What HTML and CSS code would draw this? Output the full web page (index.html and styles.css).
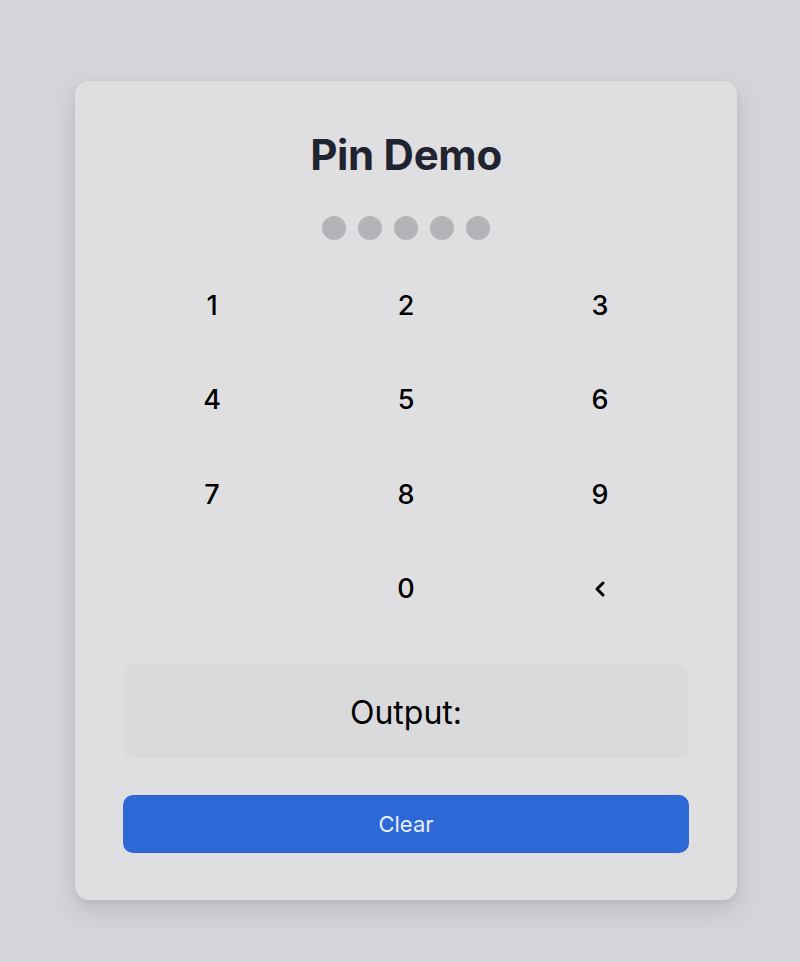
FILE: index.html
```html
<!DOCTYPE html>
<html>
<head>
<meta charset="utf-8">
<link rel="stylesheet" href="styles.css">
</head>
<body>
<div class="page">
  <div class="card">
    <h1 class="title">Pin Demo</h1>
    <div class="dots">
      <span class="dot"></span><span class="dot"></span><span class="dot"></span><span class="dot"></span><span class="dot"></span>
    </div>
    <div class="keypad">
      <button class="key">1</button>
      <button class="key">2</button>
      <button class="key">3</button>
      <button class="key">4</button>
      <button class="key">5</button>
      <button class="key">6</button>
      <button class="key">7</button>
      <button class="key">8</button>
      <button class="key">9</button>
      <span class="key empty"></span>
      <button class="key">0</button>
      <button class="key back"><svg width="14" height="18" viewBox="0 0 14 18"><path d="M10 3 L4 9 L10 15" fill="none" stroke="#000" stroke-width="3" stroke-linecap="round" stroke-linejoin="round"/></svg></button>
    </div>
    <div class="output">Output:</div>
    <button class="clear">Clear</button>
  </div>
</div>
</body>
</html>
```
FILE: styles.css
```css
html, body {
  margin: 0;
  padding: 0;
  background: #d4d5d9;
  font-family: Inter, "Noto Sans", sans-serif;
}
.page {
  padding: 81px 0 0 75px;
  min-height: 962px;
  box-sizing: border-box;
}
.card {
  width: 662px;
  box-sizing: border-box;
  background: #dfdee1;
  border-radius: 14px;
  padding: 48px 48px 47px;
  box-shadow: 0 10px 24px rgba(0, 0, 0, 0.12), 0 2px 6px rgba(0, 0, 0, 0.05);
  display: flex;
  flex-direction: column;
}
.title {
  margin: 0;
  text-align: center;
  font-size: 42px;
  line-height: 52px;
  font-weight: 700;
  color: #1f2430;
  letter-spacing: -0.3px;
}
.dots {
  display: flex;
  justify-content: center;
  gap: 12px;
  margin-top: 35px;
}
.dot {
  width: 24px;
  height: 24px;
  border-radius: 50%;
  background: #b3b4b8;
}
.keypad {
  margin-top: 18px;
  display: grid;
  grid-template-columns: repeat(3, 1fr);
  column-gap: 16px;
  grid-auto-rows: 94.5px;
}
.key {
  border: none;
  background: transparent;
  font-family: Inter, "Noto Sans", sans-serif;
  font-size: 27px;
  font-weight: 500;
  color: #000;
  display: flex;
  align-items: center;
  justify-content: center;
  padding: 0;
}
.output {
  margin-top: 29px;
  height: 93px;
  border-radius: 10px;
  background: #dad9dc;
  display: flex;
  align-items: center;
  justify-content: center;
  padding-top: 2px;
  box-sizing: border-box;
  font-size: 32px;
  color: #000;
}
.clear {
  margin-top: 37px;
  height: 58px;
  border: none;
  border-radius: 10px;
  background: #2d68d7;
  color: #e8edf8;
  font-family: Inter, "Noto Sans", sans-serif;
  font-size: 22px;
  padding: 0;
}
```
